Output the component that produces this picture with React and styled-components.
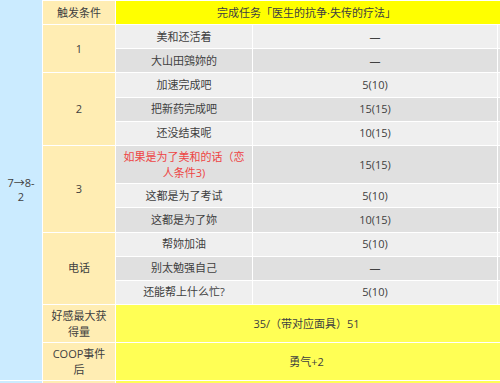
import React from 'react';
import styled, { createGlobalStyle } from 'styled-components';

const GlobalStyle = createGlobalStyle`
  html, body {
    margin: 0;
    padding: 0;
    background: #fff;
    overflow: hidden;
  }
  body {
    font-family: "Open Sans", "Noto Sans CJK SC", sans-serif;
    font-size: 11px;
    color: #404040;
  }
`;

const choices = [
  { text: ['美和还活着'], value: '—' },
  { text: ['大山田鵼妳的'], value: '—' },
  { text: ['加速完成吧'], value: '5(10)' },
  { text: ['把新药完成吧'], value: '15(15)' },
  { text: ['还没结束呢'], value: '10(15)' },
  { text: ['如果是为了美和的话（恋', '人条件3)'], value: '15(15)', red: true },
  { text: ['这都是为了考试'], value: '5(10)' },
  { text: ['这都是为了妳'], value: '10(15)' },
  { text: ['帮妳加油'], value: '5(10)' },
  { text: ['别太勉强自己'], value: '—' },
  { text: ['还能帮上什么忙?'], value: '5(10)' },
];

const groups = [
  { label: '1', from: 2, span: 2 },
  { label: '2', from: 4, span: 3 },
  { label: '3', from: 7, span: 3 },
  { label: '电话', from: 10, span: 3 },
];

const Lines = ({ items }) => items.map((t, i) => <Line key={i}>{t}</Line>);

function App() {
  return (
    <>
      <GlobalStyle />
      <Frame>
        <Table>
          <Side><Lines items={['7→8-', '2']} /></Side>
          <Cond $row={1}>触发条件</Cond>
          <Header $row={1}>完成任务「医生的抗争·失传的疗法」</Header>

          {groups.map((g) => (
            <Cond key={g.label} $row={g.from} $span={g.span}>{g.label}</Cond>
          ))}

          {choices.map((c, i) => {
            const dark = i % 2 === 1;
            const row = i + 2;
            return (
              <React.Fragment key={i}>
                <Choice $row={row} $dark={dark} $red={c.red}>
                  <Lines items={c.text} />
                </Choice>
                <Value $row={row} $dark={dark}>{c.value}</Value>
                <Extra $row={row} $dark={dark} />
              </React.Fragment>
            );
          })}

          <Cond $row={13}><Lines items={['好感最大获', '得量']} /></Cond>
          <Total $row={13}>35/（带对应面具）51</Total>
          <Cond $row={14}><Lines items={['COOP事件', '后']} /></Cond>
          <Total $row={14}>勇气+2</Total>

          <SideTail $row={15} />
          <Cond $row={15} />
          <Total $row={15} />
        </Table>
      </Frame>
    </>
  );
}

export default App;

const Frame = styled.div`
  width: 500px;
  height: 383px;
  overflow: hidden;
`;

const Table = styled.div`
  display: grid;
  width: 500px;
  padding-top: 1px;
  grid-template-columns: 42px 72px 136px 244px 1fr;
  grid-template-rows:
    23px repeat(5, 23.2px) 37.2px repeat(5, 23.2px)
    37.2px 37.2px 30px;
  gap: 1px;
  background: #fff;
`;

const Cell = styled.div`
  display: flex;
  flex-direction: column;
  align-items: stretch;
  justify-content: center;
  text-align: center;
  line-height: 16px;
  white-space: nowrap;
`;

const Line = styled.div`
  display: flex;
  justify-content: center;
`;

const Side = styled(Cell)`
  grid-column: 1;
  grid-row: 1 / 15;
  margin-top: -1px;
  background: #cbebff;
  line-height: 14px;
`;

const SideTail = styled(Cell)`
  grid-column: 1;
  grid-row: ${(p) => p.$row};
  background: #cbebff;
`;

const Cond = styled(Cell)`
  grid-column: 2;
  grid-row: ${(p) => p.$row} / span ${(p) => p.$span || 1};
  background: #ffedb3;
`;

const Header = styled(Cell)`
  grid-column: 3 / -1;
  grid-row: ${(p) => p.$row};
  background: #ffff00;
  padding-right: 3px;
`;

const Choice = styled(Cell)`
  grid-column: 3;
  grid-row: ${(p) => p.$row};
  background: ${(p) => (p.$dark ? '#e0e0e0' : '#efefef')};
  color: ${(p) => (p.$red ? '#ee4444' : '#404040')};
`;

const Value = styled(Cell)`
  grid-column: 4;
  grid-row: ${(p) => p.$row};
  background: ${(p) => (p.$dark ? '#e0e0e0' : '#efefef')};
`;

const Extra = styled.div`
  grid-column: 5;
  grid-row: ${(p) => p.$row};
  background: ${(p) => (p.$dark ? '#e0e0e0' : '#efefef')};
`;

const Total = styled(Cell)`
  grid-column: 3 / -1;
  grid-row: ${(p) => p.$row};
  background: #ffff55;
  padding-right: 3px;
`;
